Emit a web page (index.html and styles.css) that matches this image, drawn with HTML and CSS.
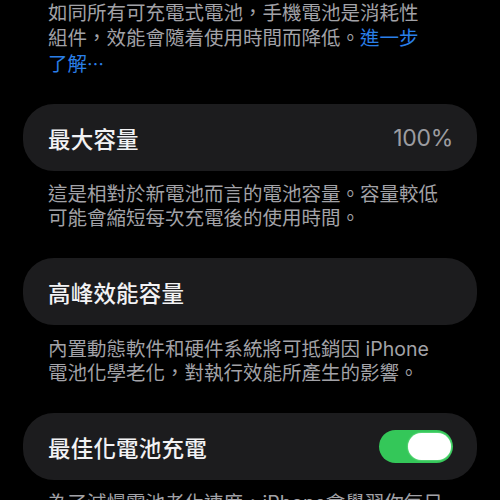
FILE: index.html
```html
<!DOCTYPE html>
<html lang="zh-Hant">
<head>
<meta charset="utf-8">
<link rel="stylesheet" href="styles.css">
</head>
<body>
<div class="page">
  <p class="note top">如同所有可充電式電池，手機電池是消耗性<br>組件，效能會隨着使用時間而降低。<span class="link">進一步<br>了解<span class="dots">⋯</span></span></p>

  <div class="card card-first">
    <span class="title">最大容量</span>
    <span class="value">100%</span>
  </div>
  <p class="note">這是相對於新電池而言的電池容量。容量較低<br>可能會縮短每次充電後的使用時間。</p>

  <div class="card">
    <span class="title">高峰效能容量</span>
  </div>
  <p class="note note-mid">內置動態軟件和硬件系統將可抵銷因 iPhone<br>電池化學老化，對執行效能所產生的影響。</p>

  <div class="card">
    <span class="title">最佳化電池充電</span>
    <span class="toggle"><span class="knob"></span></span>
  </div>
  <p class="note">為了減慢電池老化速度，iPhone會學習你每日<br>的充電習慣，以便在你需要使用前才充電至</p>
</div>
</body>
</html>
```

FILE: styles.css
```css
html, body {
  margin: 0;
  padding: 0;
  background: #000;
  height: 100%;
  overflow: hidden;
}

.page {
  padding: 1px 23px 0;
  font-family: Inter, "Noto Sans CJK TC", "DejaVu Sans", sans-serif;
  -webkit-font-smoothing: antialiased;
}

.note {
  margin: 11px 0 0;
  padding: 0 25px;
  font-size: 19.5px;
  line-height: 24px;
  color: #a2a2a7;
  white-space: nowrap;
}

.note.top {
  margin-top: 0;
  line-height: 25px;
}

.note.note-mid {
  margin-top: 12px;
}

.link {
  color: #2a7fe8;
}

.dots {
  font-family: "Noto Sans CJK TC", sans-serif;
  font-size: 17px;
}

.card {
  display: flex;
  align-items: center;
  justify-content: space-between;
  height: 67px;
  margin-top: 28px;
  padding: 0 24px 0 25px;
  background: #1c1c1e;
  border-radius: 31px;
  box-sizing: border-box;
}

.card.card-first {
  margin-top: 27px;
}

.title {
  font-size: 22.5px;
  font-weight: 500;
  color: #f2f2f4;
  letter-spacing: 0.2px;
}

.value {
  font-size: 23px;
  color: #9c9ca1;
  letter-spacing: -0.3px;
}

.toggle {
  display: flex;
  align-items: center;
  justify-content: flex-end;
  width: 74px;
  height: 33px;
  padding: 0 2px;
  box-sizing: border-box;
  background: #34c759;
  border-radius: 17px;
}

.knob {
  width: 43px;
  height: 27px;
  background: #fff;
  border-radius: 14px;
  box-shadow: 0 0 2px rgba(200, 255, 210, 0.8);
}
```
